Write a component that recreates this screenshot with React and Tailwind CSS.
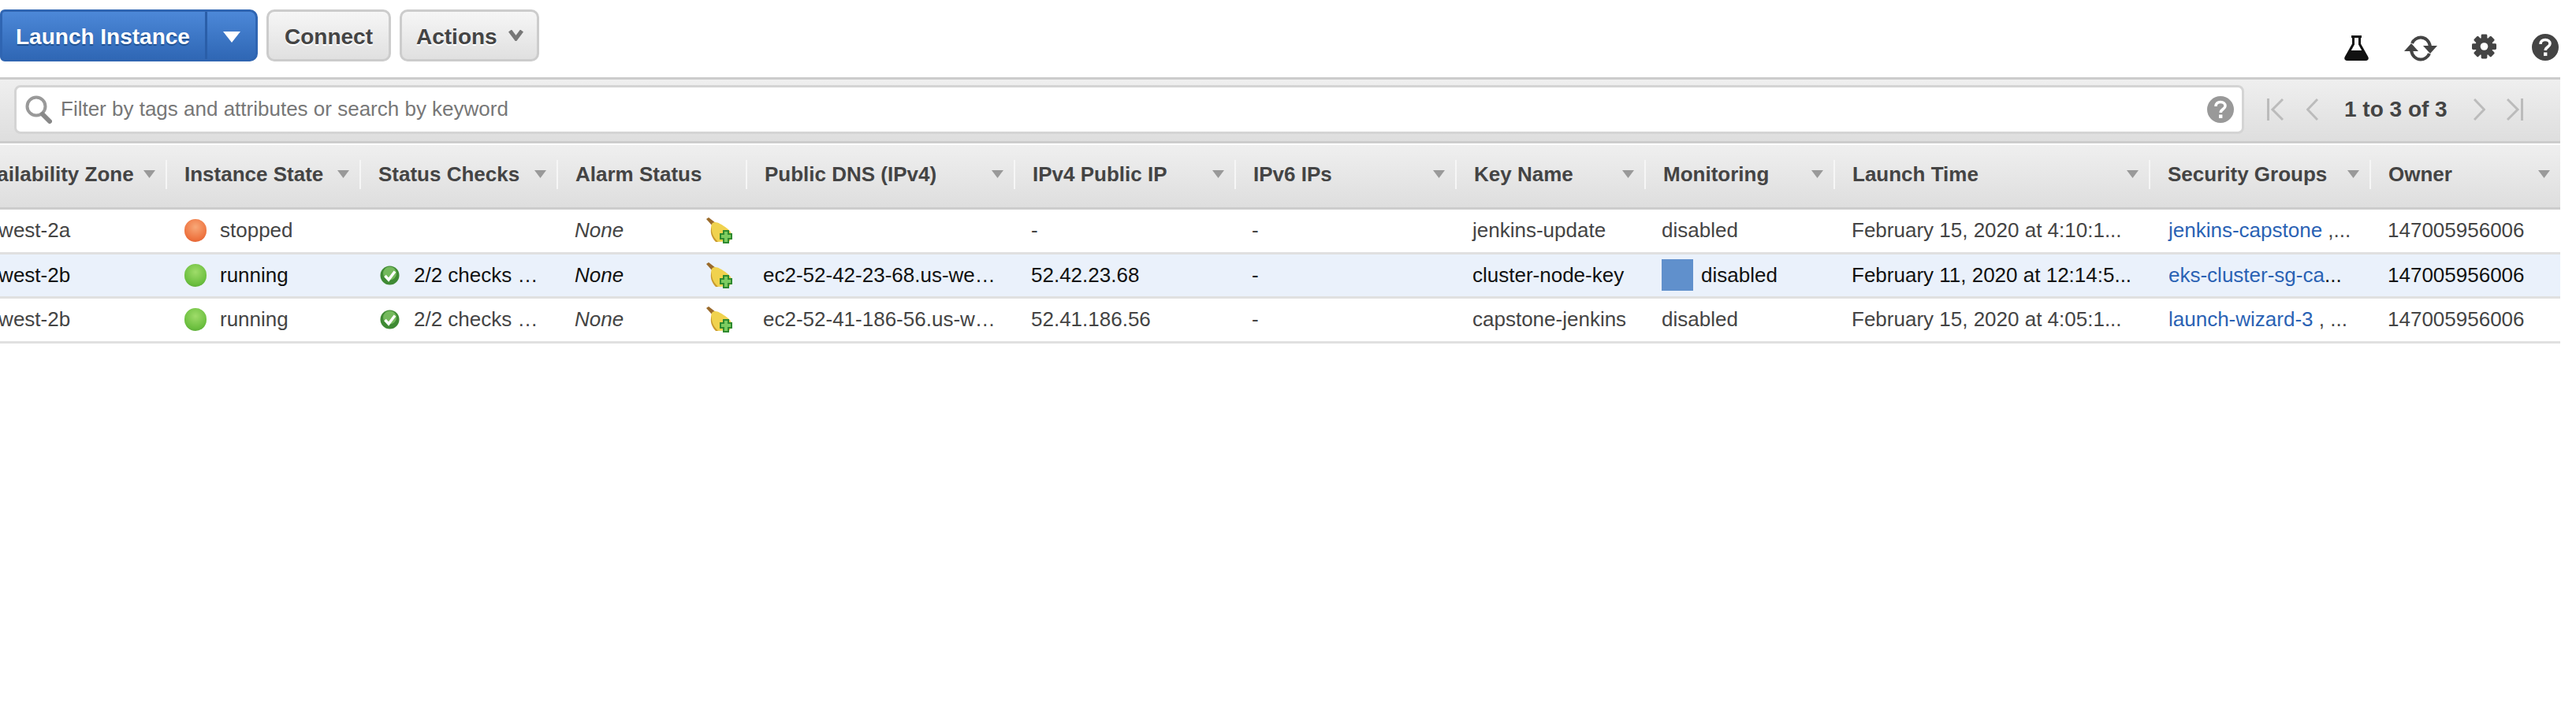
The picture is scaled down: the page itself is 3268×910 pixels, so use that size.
const cols = "grid grid-cols-[274px_246px_250px_240px_340px_280px_280px_240px_240px_400px_280px_240px]";

const headers = [
  ["Availability Zone", true], ["Instance State", true], ["Status Checks", true], ["Alarm Status", false],
  ["Public DNS (IPv4)", true], ["IPv4 Public IP", true], ["IPv6 IPs", true], ["Key Name", true],
  ["Monitoring", true], ["Launch Time", true], ["Security Groups", true], ["Owner", true],
];

const rows = [
  { az: "us-west-2a", state: "stopped", check: false, dns: "", ip: "-", key: "jenkins-update", time: "February 15, 2020 at 4:10:1...", sg: "jenkins-capstone", sgTail: " ,..." },
  { az: "us-west-2b", state: "running", check: true, dns: "ec2-52-42-23-68.us-we…", ip: "52.42.23.68", key: "cluster-node-key", time: "February 11, 2020 at 12:14:5...", sg: "eks-cluster-sg-ca", sgTail: "...", selected: true },
  { az: "us-west-2b", state: "running", check: true, dns: "ec2-52-41-186-56.us-w…", ip: "52.41.186.56", key: "capstone-jenkins", time: "February 15, 2020 at 4:05:1...", sg: "launch-wizard-3", sgTail: " , ..." },
];

function Caret() {
  return (
    <svg width="15" height="10" viewBox="0 0 15 10" className="shrink-0">
      <polygon points="0,0 15,0 7.5,10" fill="#999999" />
    </svg>
  );
}

function Broom() {
  return (
    <svg width="33" height="33" viewBox="0 0 33 33" className="shrink-0">
      <path d="M0 2 L3 0 L12 7 L8 11 Z" fill="#9a6a2a" />
      <path d="M8 7 C12 4 18 8 24 12 C28 15 32 18 32 22 L30 30 L14 31 C10 27 5 20 6 13 C6 10 7 8 8 7 Z" fill="#f0d24e" />
      <path d="M7 12 C6 20 10 26 15 31 L12 31 C7 26 4 18 7 12 Z" fill="#c99a2e" />
      <path d="M21 16 H29 V20 H33 V28 H29 V33 H21 V28 H17 V20 H21 Z" fill="#2f8a2f" />
      <path d="M23 18 H27 V22 H31 V26 H27 V31 H23 V26 H19 V22 H23 Z" fill="#7ccc60" />
    </svg>
  );
}

function CheckIcon() {
  return (
    <svg width="25" height="25" viewBox="0 0 25 25" className="shrink-0">
      <circle cx="12.5" cy="12.5" r="12" fill="#3f8a34" />
      <circle cx="12.5" cy="10" r="8.5" fill="#74b95c" />
      <path d="M6.5 13 L11 18 L19 7.5" fill="none" stroke="#ffffff" strokeWidth="3.4" />
    </svg>
  );
}

function Flask() {
  return (
    <svg width="31" height="32" viewBox="0 0 31 32">
      <path d="M9 1.5 H22" stroke="#111" strokeWidth="3" />
      <path d="M11.5 2 V11 L2 28 Q1 30.5 4 30.5 H27 Q30 30.5 29 28 L19.5 11 V2" fill="none" stroke="#111" strokeWidth="3" />
      <path d="M8 19 H23 L29 29 Q30 31 27 31 H4 Q1 31 2 29 Z" fill="#111" />
    </svg>
  );
}

function Refresh() {
  return (
    <svg width="42" height="33" viewBox="0 0 42 33" fill="none">
      <path d="M10 10 C12 5 17 2.5 21 2.5 C27 2.5 32 7 33 14" stroke="#444" strokeWidth="4" />
      <path d="M32 23 C30 28 25 30.5 21 30.5 C15 30.5 10 26 9 19" stroke="#444" strokeWidth="4" />
      <polygon points="0,20 18,20 9,10" fill="#444" />
      <polygon points="24,13 42,13 33,23" fill="#444" />
    </svg>
  );
}

function Gear() {
  return (
    <svg width="31" height="32" viewBox="0 0 32 32">
      <g fill="#444">
        <circle cx="16" cy="16" r="11.5" />
        <rect x="12" y="0" width="8" height="32" rx="1.5" />
        <rect x="0" y="12" width="32" height="8" rx="1.5" />
        <rect x="12" y="0" width="8" height="32" rx="1.5" transform="rotate(45 16 16)" />
        <rect x="12" y="0" width="8" height="32" rx="1.5" transform="rotate(-45 16 16)" />
      </g>
      <circle cx="16" cy="16" r="5" fill="#ffffff" />
    </svg>
  );
}

function HelpCircle({ fill, size }) {
  return (
    <svg width={size} height={size} viewBox="0 0 34 34">
      <circle cx="17" cy="17" r="17" fill={fill} />
      <path d="M11 13 C11 9.5 13.5 7.5 17 7.5 C20.5 7.5 23 9.5 23 12.5 C23 16.5 17.2 16.5 17.2 21" fill="none" stroke="#ffffff" strokeWidth="3.6" />
      <rect x="15" y="23.5" width="4.4" height="4.4" fill="#ffffff" />
    </svg>
  );
}

function Search() {
  return (
    <svg width="34" height="36" viewBox="0 0 34 36" fill="none" className="shrink-0">
      <circle cx="14" cy="14" r="11.5" stroke="#999" strokeWidth="4" fill="#ffffff" />
      <path d="M22 24 L31 33" stroke="#888" strokeWidth="6" strokeLinecap="round" />
    </svg>
  );
}

function Pager({ dir, bar }) {
  const left = dir === "left";
  return (
    <svg width={bar ? 21 : 15} height="28" viewBox={bar ? "0 0 21 28" : "0 0 15 28"} fill="none">
      {bar && <path d={left ? "M1.5 0 V28" : "M19.5 0 V28"} stroke="#bbbbbb" strokeWidth="3" />}
      {left
        ? <path d={bar ? "M20 1 L7 14 L20 27" : "M14 1 L1.5 14 L14 27"} stroke="#bbbbbb" strokeWidth="3" />
        : <path d={bar ? "M1 1 L14 14 L1 27" : "M1 1 L13.5 14 L1 27"} stroke="#bbbbbb" strokeWidth="3" />}
    </svg>
  );
}

function Dot({ running }) {
  return (
    <span
      className={
        "block w-[28px] h-[29px] rounded-full shrink-0 " +
        (running
          ? "bg-[radial-gradient(circle_at_50%_35%,#9fdc6a,#6cbf3f_65%,#4f9f34)]"
          : "bg-[radial-gradient(circle_at_50%_35%,#f8a878,#ee7440_65%,#d9552a)]")
      }
    />
  );
}

function Row({ r }) {
  const base = r.selected ? "bg-[#eaf1fb] text-[#111111]" : "bg-white text-[#444444]";
  return (
    <div className={cols + " h-[56.5px] items-center border-b-[3px] border-[#e0e0e0] whitespace-nowrap " + base}>
      <div className="pl-[24px]">{r.az}</div>
      <div className="flex items-center pl-[22px] gap-[17px]"><Dot running={r.state === "running"} />{r.state}</div>
      <div className="flex items-center pl-[24px] gap-[18px]">
        {r.check && <><CheckIcon /><span>2/2 checks …</span></>}
      </div>
      <div className="flex items-center justify-between pl-[21px] pr-[19px]"><i>None</i><Broom /></div>
      <div className="pl-[20px]">{r.dns}</div>
      <div className="pl-[20px]">{r.ip}</div>
      <div className="pl-[20px]">-</div>
      <div className="pl-[20px]">{r.key}</div>
      <div className="flex items-center pl-[20px] gap-[10px]">
        {r.selected && <span className="block w-[40px] h-[40px] bg-[#6090cc] shrink-0" />}
        disabled
      </div>
      <div className="pl-[21px]">{r.time}</div>
      <div className="pl-[23px]"><span className="text-[#2a62b4]">{r.sg}</span>{r.sgTail}</div>
      <div className="pl-[21px]">147005956006</div>
    </div>
  );
}

function GrayButton({ children, className = "" }) {
  return (
    <div className={"flex items-center h-[66px] pt-[3px] rounded-[10px] border-[3px] border-[#cccccc] bg-gradient-to-b from-[#f6f6f6] to-[#e0e0e0] text-[#444444] font-bold text-[28px] [text-shadow:0_2px_0_#ffffff] " + className}>
      {children}
    </div>
  );
}

export default function App() {
  return (
    <div className="w-[3248px] min-h-[910px] bg-white font-['Liberation_Sans',Arial,sans-serif] text-[26px] overflow-hidden">
      <div className="h-[98px] flex pt-[12px]">
        <div className="flex h-[66px] w-[327px] rounded-r-[10px] rounded-l-[6px] border-[3px] border-[#2f65b2] bg-gradient-to-b from-[#4c88d8] to-[#2f67b5] text-white font-bold text-[28px]">
          <div className="w-[260px] flex items-center pl-[17px] pt-[3px] border-r-[3px] border-[#2a5ea8] [text-shadow:0_2px_1px_#20508f]">Launch Instance</div>
          <div className="flex-1 flex items-center justify-center pt-[3px]">
            <svg width="22" height="14" viewBox="0 0 22 14"><polygon points="0,0 22,0 11,14" fill="#ffffff" /></svg>
          </div>
        </div>
        <GrayButton className="ml-[11px] w-[158px] justify-center">Connect</GrayButton>
        <GrayButton className="ml-[11px] w-[177px] pl-[18px] gap-[14px]">
          Actions
          <svg width="19" height="14" viewBox="0 0 19 14" fill="none" className="-mt-[3px]"><path d="M2 1 L9.5 11 L17 1" stroke="#777777" strokeWidth="5" /></svg>
        </GrayButton>
        <div className="ml-auto flex items-start pt-[33px] pr-[2px]">
          <Flask />
          <div className="ml-[45px]"><Refresh /></div>
          <div className="ml-[44px] -mt-[2px]"><Gear /></div>
          <div className="ml-[45px] -mt-[2px]"><HelpCircle fill="#444444" size={34} /></div>
        </div>
      </div>

      <div className="h-[84px] flex items-center border-y-[3px] border-[#cccccc] bg-gradient-to-b from-[#efefef] to-[#dedede] pl-[18px] pb-[3px]">
        <div className="w-[2829px] h-[62px] flex items-center rounded-[8px] border-[3px] border-[#d4d4d4] bg-white pl-[11px] pr-[10px] text-[#777777]">
          <Search />
          <span className="ml-[11px]">Filter by tags and attributes or search by keyword</span>
          <span className="ml-auto"><HelpCircle fill="#999999" size={34} /></span>
        </div>
        <div className="ml-[29px]"><Pager dir="left" bar /></div>
        <div className="ml-[29px]"><Pager dir="left" /></div>
        <div className="ml-[33px] font-bold text-[#444444] text-[28px]">1 to 3 of 3</div>
        <div className="ml-[33px]"><Pager dir="right" /></div>
        <div className="ml-[27px]"><Pager dir="right" bar /></div>
      </div>

      <div className="overflow-hidden">
        <div className="-ml-[62px] w-[3310px] mt-[2px]">
          <div className={cols + " h-[82px] items-center pb-[5px] border-b-[3px] border-[#cccccc] bg-gradient-to-b from-[#efefef] to-[#dedede] font-bold text-[#444444] whitespace-nowrap"}>
            {headers.map(([label, sort], i) => (
              <div key={label} className={"h-[37px] flex items-center justify-between pr-[13px] " + (i === 0 ? "pl-[26px] " : "pl-[22px] ") + (i < headers.length - 1 ? "border-r-2 border-[#f6f6f6]" : "")}>
                {label}
                {sort && <Caret />}
              </div>
            ))}
          </div>
          {rows.map((r, i) => <Row key={i} r={r} />)}
        </div>
      </div>
    </div>
  );
}
